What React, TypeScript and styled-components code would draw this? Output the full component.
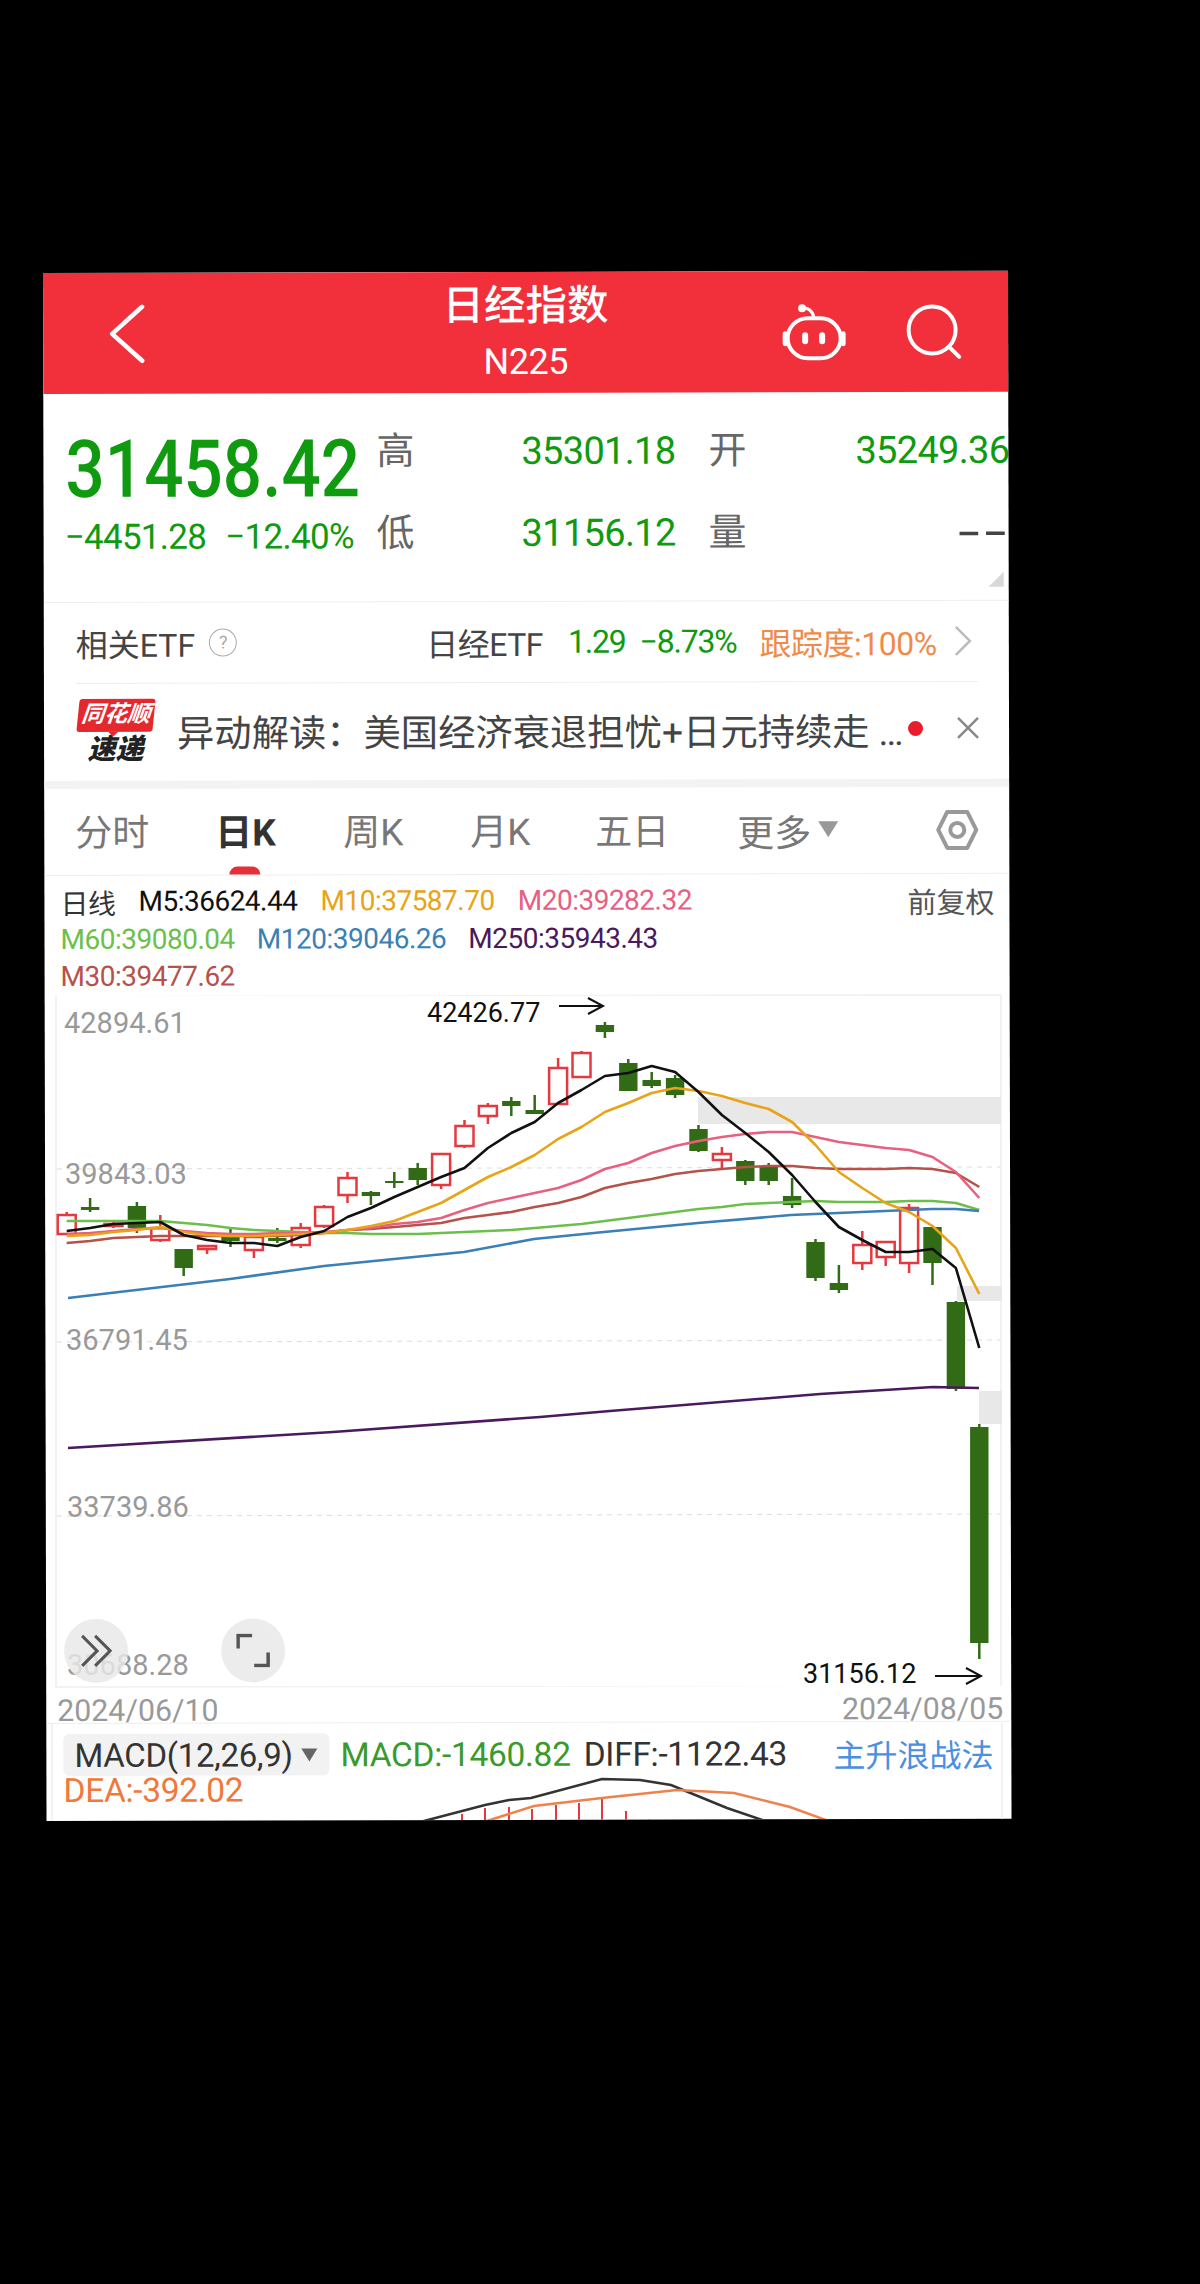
import styled, { createGlobalStyle } from "styled-components";

const SANS = `Roboto, "Noto Sans CJK SC", sans-serif`;
const GREEN = "#0f9a0f";
const CANDLE_GREEN = "#326b16";
const CANDLE_RED = "#e5393f";

// the photographed phone sits a little crooked, chart data is read in page coordinates
const TILT = 0.13;
const fromPage = (top: number) =>
   `translate(0 ${-top}) rotate(${TILT}) translate(-43 -273)`;

const xAt = (i: number) => 66.7 + i * 23.4;

type Candle = [up: boolean, high: number, top: number, bottom: number, low: number];

const candles: Candle[] = [
   [true, 1212, 1215, 1234, 1235],
   [false, 1198, 1207, 1210, 1212],
   [true, 1222, 1224, 1226, 1228],
   [false, 1202, 1206, 1228, 1233],
   [true, 1215, 1228, 1240, 1242],
   [false, 1249, 1249, 1268, 1276],
   [true, 1246, 1246, 1249, 1254],
   [false, 1228, 1237, 1241, 1247],
   [true, 1235, 1237, 1250, 1258],
   [false, 1228, 1238, 1241, 1243],
   [true, 1223, 1228, 1245, 1248],
   [true, 1205, 1207, 1226, 1228],
   [true, 1172, 1178, 1195, 1203],
   [false, 1191, 1192, 1196, 1205],
   [false, 1172, 1181, 1183, 1188],
   [false, 1163, 1168, 1180, 1185],
   [true, 1154, 1154, 1185, 1189],
   [true, 1120, 1126, 1146, 1148],
   [true, 1103, 1106, 1116, 1124],
   [false, 1097, 1101, 1106, 1116],
   [false, 1095, 1110, 1114, 1114],
   [true, 1058, 1068, 1104, 1104],
   [true, 1051, 1053, 1077, 1077],
   [false, 1022, 1025, 1032, 1038],
   [false, 1059, 1063, 1091, 1091],
   [false, 1072, 1080, 1086, 1088],
   [false, 1075, 1078, 1095, 1098],
   [false, 1125, 1129, 1151, 1152],
   [true, 1147, 1154, 1160, 1168],
   [false, 1160, 1161, 1181, 1185],
   [false, 1163, 1167, 1181, 1185],
   [false, 1178, 1196, 1205, 1208],
   [false, 1239, 1242, 1278, 1281],
   [false, 1265, 1283, 1290, 1293],
   [true, 1231, 1245, 1263, 1270],
   [true, 1242, 1242, 1257, 1266],
   [true, 1204, 1208, 1263, 1273],
   [false, 1227, 1227, 1263, 1285],
   [false, 1301, 1302, 1389, 1391],
   [false, 1424, 1427, 1643, 1659],
];

const series = (values: number[]) =>
   values.map((y, i) => `${xAt(i).toFixed(1)},${y}`).join(" ");

const averages = [
   {
      color: "#6cbf4b",
      points: series([1221, 1221, 1221, 1221, 1221, 1223, 1225, 1228, 1230, 1231, 1232, 1233, 1233, 1234, 1234, 1234, 1233, 1232, 1231, 1230, 1228, 1226, 1224, 1221, 1218, 1215, 1212, 1209, 1207, 1204, 1203, 1202, 1201, 1202, 1202, 1202, 1201, 1201, 1203, 1210]),
   },
   {
      color: "#3a7fb5",
      points: "68,1298 230,1279 324,1266 464,1252 534,1239 604,1232 698,1223 791,1215 885,1211 932,1209 956,1209 979,1211",
   },
   {
      color: "#4a1a5c",
      points: "68,1448 333,1432 540,1417 610,1411 820,1394 933,1387 979,1388",
   },
   {
      color: "#b5524a",
      points: series([1243, 1241, 1238, 1237, 1236, 1236, 1236, 1236, 1236, 1236, 1235, 1233, 1230, 1229, 1227, 1225, 1223, 1218, 1215, 1212, 1207, 1203, 1197, 1188, 1183, 1179, 1174, 1171, 1169, 1167, 1166, 1166, 1168, 1169, 1169, 1169, 1168, 1169, 1173, 1187]),
   },
   {
      color: "#e8607f",
      points: series([1234, 1233, 1231, 1229, 1228, 1231, 1233, 1234, 1234, 1233, 1233, 1232, 1230, 1228, 1224, 1222, 1218, 1210, 1203, 1198, 1193, 1188, 1180, 1169, 1163, 1153, 1146, 1141, 1137, 1134, 1132, 1132, 1137, 1142, 1145, 1148, 1150, 1157, 1172, 1198]),
   },
   {
      color: "#e8a317",
      points: series([1236, 1235, 1232, 1230, 1227, 1232, 1235, 1236, 1236, 1235, 1234, 1233, 1230, 1226, 1221, 1212, 1203, 1190, 1177, 1167, 1155, 1139, 1127, 1112, 1103, 1093, 1088, 1091, 1096, 1103, 1109, 1122, 1145, 1172, 1188, 1203, 1212, 1226, 1248, 1294]),
   },
   {
      color: "#111111",
      points: series([1231, 1228, 1224, 1223, 1222, 1235, 1240, 1243, 1243, 1246, 1237, 1231, 1217, 1208, 1197, 1187, 1177, 1168, 1148, 1133, 1122, 1103, 1090, 1076, 1073, 1066, 1072, 1092, 1115, 1133, 1152, 1175, 1202, 1227, 1240, 1252, 1252, 1249, 1268, 1348]),
   },
];

const macdBars: [number, number][] = [
   [462, 1813], [485, 1807], [509, 1806], [532, 1808], [556, 1804],
   [579, 1802], [602, 1798], [626, 1810], [649, 1818],
];

const tabs = [
   { label: "分时", width: 140 },
   { label: "日K", width: 128 },
   { label: "周K", width: 127 },
   { label: "月K", width: 125 },
   { label: "五日", width: 142 },
].map((tab) => ({ ...tab, active: tab.label === "日K" }));

const GlobalStyle = createGlobalStyle`
   html, body {
      margin: 0;
      padding: 0;
      background: #000;
   }
`;

const Page = styled.div`
   width: 1200px;
   height: 2284px;
   box-sizing: border-box;
   padding: 273px 0 0 43px;
   background: #000;
   overflow: hidden;
   font-family: ${SANS};
`;

const Phone = styled.div`
   width: 965px;
   height: 1548px;
   background: #fff;
   overflow: hidden;
   transform: rotate(-${TILT}deg);
   transform-origin: 0 0;
`;

const Header = styled.header`
   height: 121px;
   background: #f1303c;
   display: grid;
   grid-template-columns: 1fr auto 1fr;
   align-items: center;
   color: #fff;
`;

const BackSlot = styled.div`
   padding-left: 66px;
   display: flex;
`;

const TitleBlock = styled.div`
   align-self: start;
   padding-top: 9px;
   display: flex;
   flex-direction: column;
   align-items: center;
`;

const Title = styled.div`
   font-size: 41.5px;
   line-height: 50px;
   font-weight: 500;
`;

const Symbol = styled.div`
   font-size: 36px;
   line-height: 42px;
   margin-top: 10px;
   letter-spacing: -0.5px;
`;

const HeaderIcons = styled.div`
   display: flex;
   justify-content: flex-end;
   align-items: center;
   gap: 60px;
   padding-right: 46px;
`;

const Quote = styled.section`
   position: relative;
   height: 209px;
   box-sizing: border-box;
   padding: 38px 0 0 22px;
   display: grid;
   grid-template-columns: 311px 145px 187px 147px 153px;
   grid-auto-rows: 40px;
   row-gap: 42px;
   border-bottom: 1px solid #eeeeee;
   overflow: hidden;
`;

const PriceBlock = styled.div`
   grid-row: span 2;
   padding-top: 8px;
`;

const BigPrice = styled.div`
   font-size: 80px;
   line-height: 60px;
   font-weight: 500;
   color: ${GREEN};
   transform: scaleX(0.865);
   transform-origin: 0 50%;
   white-space: nowrap;
`;

const Changes = styled.div`
   margin-top: 22px;
   margin-left: -1px;
   display: flex;
   gap: 19px;
   font-size: 35px;
   line-height: 32px;
   color: ${GREEN};
   letter-spacing: -0.7px;
`;

const QuoteLabel = styled.div`
   font-size: 38px;
   line-height: 40px;
   color: #666666;
`;

const QuoteValue = styled.div`
   font-size: 38px;
   line-height: 40px;
   color: ${GREEN};
   letter-spacing: -0.7px;
   white-space: nowrap;
`;

const EmptyValue = styled.div`
   font-size: 38px;
   line-height: 40px;
   font-weight: 500;
   color: #444444;
   text-align: right;
   letter-spacing: 1px;
   margin-right: -1px;
   transform: scaleX(1.9);
   transform-origin: 100% 50%;
`;

const CornerMark = styled.div`
   position: absolute;
   right: 5px;
   bottom: 13px;
   width: 0;
   height: 0;
   border-left: 15px solid transparent;
   border-bottom: 15px solid #d8d8d8;
`;

const EtfRow = styled.div`
   height: 81px;
   margin: 0 31px 0 32px;
   display: flex;
   align-items: center;
   border-bottom: 1px solid #eeeeee;
   box-sizing: border-box;
   font-size: 32px;
   white-space: nowrap;
`;

const EtfName = styled.span`
   color: #444444;
`;

const HelpMark = styled.span`
   width: 26px;
   height: 26px;
   margin-left: 14px;
   border: 1.5px solid #aaaaaa;
   border-radius: 50%;
   font-size: 18px;
   line-height: 26px;
   text-align: center;
   color: #aaaaaa;
`;

const EtfTrack = styled.span<{ $gap: number; $color: string; $tight?: boolean }>`
   margin-left: ${(p) => p.$gap}px;
   color: ${(p) => p.$color};
   letter-spacing: ${(p) => (p.$tight ? -1.2 : -0.5)}px;
`;

const EtfChevron = styled.svg`
   margin-left: 16px;
`;

const NewsRow = styled.div`
   height: 105px;
   box-sizing: border-box;
   padding: 15px 28px 0 33px;
   display: flex;
   align-items: flex-start;
   border-bottom: 8px solid #f3f3f3;
`;

const Logo = styled.div`
   width: 77px;
   flex-shrink: 0;
   display: flex;
   flex-direction: column;
   align-items: center;
`;

const LogoBadge = styled.div`
   position: relative;
   width: 76px;
   height: 33px;
   background: #e5282e;
   border-radius: 3px;
   transform: skewX(-6deg);
   color: #fff;
   font-size: 23px;
   line-height: 32px;
   font-weight: 700;
   font-style: italic;
   text-align: center;
   white-space: nowrap;

   &::after {
      content: "";
      position: absolute;
      left: 32px;
      bottom: -5px;
      border-left: 5px solid transparent;
      border-right: 5px solid transparent;
      border-top: 5px solid #e5282e;
   }
`;

const LogoWord = styled.div`
   margin-top: 2px;
   font-size: 28px;
   line-height: 31px;
   font-weight: 900;
   font-style: italic;
   color: #222222;
   white-space: nowrap;
`;

const NewsText = styled.div`
   width: 722px;
   margin: 15px 0 0 23px;
   flex-shrink: 0;
   font-size: 37.3px;
   line-height: 40px;
   color: #444444;
   white-space: nowrap;
`;

const NewsEllipsis = styled.span`
   margin-left: 9px;
`;

const NewsDot = styled.span`
   width: 15px;
   height: 15px;
   margin: 24px 0 0 9px;
   flex-shrink: 0;
   border-radius: 50%;
   background: #ea1d2c;
`;

const NewsClose = styled.svg`
   margin: 19px 0 0 33px;
   flex-shrink: 0;
`;

const TabBar = styled.nav`
   height: 87px;
   box-sizing: border-box;
   padding-left: 31px;
   display: flex;
   border-bottom: 1px solid #eeeeee;
`;

const Tab = styled.div<{ $width: number; $active?: boolean }>`
   position: relative;
   width: ${(p) => p.$width}px;
   flex-shrink: 0;
   font-size: 37px;
   line-height: 90px;
   font-weight: ${(p) => (p.$active ? 700 : 400)};
   color: ${(p) => (p.$active ? "#333333" : "#777777")};

   &::after {
      content: "";
      display: ${(p) => (p.$active ? "block" : "none")};
      position: absolute;
      left: 14px;
      bottom: 0;
      width: 31px;
      height: 8px;
      border-radius: 8px 8px 0 0;
      background: #e5303a;
   }
`;

const MoreTab = styled.div`
   width: 199px;
   flex-shrink: 0;
   display: flex;
   align-items: center;
   gap: 7px;
   font-size: 37px;
   color: #777777;
`;

const MoreCaret = styled.span`
   width: 0;
   height: 0;
   margin-top: -2px;
   border-left: 10px solid transparent;
   border-right: 10px solid transparent;
   border-top: 16px solid #999999;
`;

const SettingsIcon = styled.svg`
   align-self: center;
   margin-left: -1px;
`;

const Legend = styled.div`
   height: 120px;
   box-sizing: border-box;
   padding: 7px 15px 0 16px;
`;

const LegendRow = styled.div<{ $gap?: number }>`
   height: 37.5px;
   display: flex;
   align-items: center;
   gap: ${(p) => p.$gap ?? 22}px;
   font-size: 28px;
   letter-spacing: -0.5px;
   white-space: nowrap;
`;

const LegendItem = styled.span<{ $color: string }>`
   color: ${(p) => p.$color};
`;

const Adjust = styled.span`
   margin-left: auto;
   font-size: 29px;
   color: #555555;
   letter-spacing: 0;
`;

const ChartArea = styled.div`
   position: relative;
   height: 692px;
`;

const ChartSvg = styled.svg`
   display: block;
   width: 965px;
   height: 692px;
`;

const AxisText = styled.text`
   font-family: ${SANS};
   font-size: 29px;
   fill: #999999;
`;

const PeakText = styled.text`
   font-family: ${SANS};
   font-size: 27px;
   fill: #111111;
`;

const RoundButton = styled.div<{ $left: number }>`
   position: absolute;
   left: ${(p) => p.$left}px;
   bottom: 5px;
   width: 64px;
   height: 64px;
   border-radius: 50%;
   background: rgba(232, 232, 232, 0.82);
   display: flex;
   align-items: center;
   justify-content: center;
`;

const DateRow = styled.div`
   height: 35px;
   padding: 0 8px 0 11px;
   display: flex;
   justify-content: space-between;
   font-size: 30.3px;
   line-height: 46px;
   color: #999999;
`;

const MacdPanel = styled.section`
   position: relative;
   height: 102px;
   border-top: 1px solid #eeeeee;
`;

const MacdSvg = styled.svg`
   position: absolute;
   left: 0;
   top: 0;
   width: 965px;
   height: 102px;
`;

const MacdHead = styled.div`
   position: relative;
   padding: 8px 18px 0 17px;
   display: flex;
   align-items: center;
   font-size: 33.5px;
   white-space: nowrap;
`;

const MacdSelect = styled.div`
   width: 266px;
   height: 42px;
   box-sizing: border-box;
   padding-left: 11px;
   display: flex;
   align-items: center;
   gap: 9px;
   background: #f2f2f2;
   border-radius: 6px;
   font-size: 33px;
   color: #333333;
   letter-spacing: -0.3px;
`;

const SelectCaret = styled.span`
   width: 0;
   height: 0;
   border-left: 8px solid transparent;
   border-right: 8px solid transparent;
   border-top: 13px solid #666666;
`;

const MacdValue = styled.span<{ $color: string; $gap: number }>`
   margin-left: ${(p) => p.$gap}px;
   color: ${(p) => p.$color};
   letter-spacing: -0.3px;
`;

const Strategy = styled.span`
   margin-left: auto;
   color: #4a8fe0;
   font-size: 32px;
`;

const DeaText = styled.div`
   position: relative;
   margin: -4px 0 0 17px;
   font-size: 33.5px;
   line-height: 34px;
   color: #f0783c;
   letter-spacing: -0.3px;
`;

const CandleMark = ({ candle, index }: { candle: Candle; index: number }) => {
   const [up, high, top, bottom, low] = candle;
   const x = xAt(index);
   const color = up ? CANDLE_RED : CANDLE_GREEN;
   return (
      <g stroke={color} strokeWidth={2.5}>
         <line x1={x} x2={x} y1={high} y2={top} />
         <line x1={x} x2={x} y1={bottom} y2={low} />
         {up ? (
            <rect x={x - 9} y={top} width={18} height={bottom - top} fill="#fff" />
         ) : (
            <rect x={x - 9.2} y={top} width={18.4} height={bottom - top} fill={color} stroke="none" />
         )}
      </g>
   );
};

const App = () => {
   return (
      <>
         <GlobalStyle />
         <Page>
            <Phone>
               <Header>
                  <BackSlot>
                     <svg width="36" height="60" viewBox="0 0 36 60">
                        <path d="M33 3 L3 30 L33 57" fill="none" stroke="#fff" strokeWidth="4.5" strokeLinecap="round" strokeLinejoin="round" />
                     </svg>
                  </BackSlot>
                  <TitleBlock>
                     <Title>日经指数</Title>
                     <Symbol>N225</Symbol>
                  </TitleBlock>
                  <HeaderIcons>
                     <svg width="64" height="58" viewBox="0 0 64 58">
                        <path d="M20 5 C26 4 31 8 32 15" fill="none" stroke="#fff" strokeWidth="3" strokeLinecap="round" />
                        <circle cx="20" cy="5" r="4" fill="#fff" />
                        <rect x="5.5" y="15" width="53" height="40" rx="20" fill="none" stroke="#fff" strokeWidth="4" />
                        <rect x="0.5" y="28" width="5" height="15" rx="2.5" fill="#fff" />
                        <rect x="58.5" y="28" width="5" height="15" rx="2.5" fill="#fff" />
                        <rect x="20" y="29" width="6" height="12" rx="3" fill="#fff" />
                        <rect x="37" y="29" width="6" height="12" rx="3" fill="#fff" />
                     </svg>
                     <svg width="56" height="56" viewBox="0 0 56 56">
                        <circle cx="26" cy="26" r="23.5" fill="none" stroke="#fff" strokeWidth="4" />
                        <path d="M44 44 L53 53" stroke="#fff" strokeWidth="4" strokeLinecap="round" />
                     </svg>
                  </HeaderIcons>
               </Header>

               <Quote>
                  <PriceBlock>
                     <BigPrice>31458.42</BigPrice>
                     <Changes>
                        <span>−4451.28</span>
                        <span>−12.40%</span>
                     </Changes>
                  </PriceBlock>
                  <QuoteLabel>高</QuoteLabel>
                  <QuoteValue>35301.18</QuoteValue>
                  <QuoteLabel>开</QuoteLabel>
                  <QuoteValue>35249.36</QuoteValue>
                  <QuoteLabel>低</QuoteLabel>
                  <QuoteValue>31156.12</QuoteValue>
                  <QuoteLabel>量</QuoteLabel>
                  <EmptyValue>--</EmptyValue>
                  <CornerMark />
               </Quote>

               <EtfRow>
                  <EtfName>相关ETF</EtfName>
                  <HelpMark>?</HelpMark>
                  <EtfTrack $gap={189} $color="#444444">日经ETF</EtfTrack>
                  <EtfTrack $gap={25} $color={GREEN} $tight>1.29</EtfTrack>
                  <EtfTrack $gap={14} $color={GREEN} $tight>−8.73%</EtfTrack>
                  <EtfTrack $gap={23} $color="#f08a4b">跟踪度:100%</EtfTrack>
                  <EtfChevron width="20" height="32" viewBox="0 0 20 32">
                     <path d="M3 2 L17 16 L3 30" fill="none" stroke="#bbbbbb" strokeWidth="2.5" />
                  </EtfChevron>
               </EtfRow>

               <NewsRow>
                  <Logo>
                     <LogoBadge>同花顺</LogoBadge>
                     <LogoWord>速递</LogoWord>
                  </Logo>
                  <NewsText>
                     异动解读：美国经济衰退担忧+日元持续走
                     <NewsEllipsis>…</NewsEllipsis>
                  </NewsText>
                  <NewsDot />
                  <NewsClose width="24" height="24" viewBox="0 0 24 24">
                     <path d="M2 2 L22 22 M22 2 L2 22" stroke="#888888" strokeWidth="2.5" />
                  </NewsClose>
               </NewsRow>

               <TabBar>
                  {tabs.map((tab) => (
                     <Tab key={tab.label} $width={tab.width} $active={tab.active}>
                        {tab.label}
                     </Tab>
                  ))}
                  <MoreTab>
                     更多
                     <MoreCaret />
                  </MoreTab>
                  <SettingsIcon width="44" height="42" viewBox="0 0 44 42">
                     <path d="M12 3 H32 L41 21 L32 39 H12 L3 21 Z" fill="none" stroke="#999999" strokeWidth="4" strokeLinejoin="round" />
                     <circle cx="22" cy="21" r="7" fill="none" stroke="#999999" strokeWidth="4" />
                  </SettingsIcon>
               </TabBar>

               <Legend>
                  <LegendRow $gap={23}>
                     <LegendItem $color="#333333">日线</LegendItem>
                     <LegendItem $color="#111111">M5:36624.44</LegendItem>
                     <LegendItem $color="#e8a317">M10:37587.70</LegendItem>
                     <LegendItem $color="#e8607f">M20:39282.32</LegendItem>
                     <Adjust>前复权</Adjust>
                  </LegendRow>
                  <LegendRow>
                     <LegendItem $color="#6cbf4b">M60:39080.04</LegendItem>
                     <LegendItem $color="#3a7fb5">M120:39046.26</LegendItem>
                     <LegendItem $color="#4a1a5c">M250:35943.43</LegendItem>
                  </LegendRow>
                  <LegendRow>
                     <LegendItem $color="#b5524a">M30:39477.62</LegendItem>
                  </LegendRow>
               </Legend>

               <ChartArea>
                  <ChartSvg viewBox="0 0 965 692">
                     <g transform={fromPage(723)}>
                        <rect x="56" y="995" width="945" height="692" fill="none" stroke="#eeeeee" strokeWidth="1.5" />
                        <rect x="698" y="1097" width="303" height="27" fill="#e8e8e8" />
                        <rect x="957" y="1286" width="45" height="15" fill="#e8e8e8" />
                        <rect x="979" y="1391" width="23" height="33" fill="#e8e8e8" />
                        <g stroke="#dddddd" strokeWidth="1" strokeDasharray="5 5">
                           <line x1="57" x2="1000" y1="1169" y2="1167" />
                           <line x1="57" x2="1000" y1="1342" y2="1340" />
                           <line x1="57" x2="1000" y1="1516" y2="1514" />
                        </g>
                        <AxisText x="64" y="1033">42894.61</AxisText>
                        <AxisText x="65" y="1184">39843.03</AxisText>
                        <AxisText x="66" y="1350">36791.45</AxisText>
                        <AxisText x="67" y="1517">33739.86</AxisText>
                        <AxisText x="67" y="1675">30688.28</AxisText>
                        {candles.map((candle, i) => (
                           <CandleMark key={i} candle={candle} index={i} />
                        ))}
                        {averages.map((line) => (
                           <polyline
                              key={line.color}
                              points={line.points}
                              fill="none"
                              stroke={line.color}
                              strokeWidth="2.6"
                              strokeLinejoin="round"
                           />
                        ))}
                        <PeakText x="427" y="1022">42426.77</PeakText>
                        <path d="M559 1006 H602 M588 998 L603 1006 L588 1014" fill="none" stroke="#111111" strokeWidth="2" />
                        <PeakText x="803" y="1683">31156.12</PeakText>
                        <path d="M935 1676 H980 M966 1668 L981 1676 L966 1684" fill="none" stroke="#111111" strokeWidth="2" />
                     </g>
                  </ChartSvg>
                  <RoundButton $left={18}>
                     <svg width="36" height="36" viewBox="0 0 36 36">
                        <path d="M4 3 L19 18 L4 33 M17 3 L32 18 L17 33" fill="none" stroke="#555555" strokeWidth="3" />
                     </svg>
                  </RoundButton>
                  <RoundButton $left={175}>
                     <svg width="34" height="34" viewBox="0 0 34 34">
                        <path d="M2 15 V2 H16 M32 19 V32 H18" fill="none" stroke="#555555" strokeWidth="3.5" />
                     </svg>
                  </RoundButton>
               </ChartArea>

               <DateRow>
                  <span>2024/06/10</span>
                  <span>2024/08/05</span>
               </DateRow>

               <MacdPanel>
                  <MacdSvg viewBox="0 0 965 102">
                     <g transform={fromPage(1450)}>
                        <line x1="1002" x2="1002" y1="1722" y2="1830" stroke="#eeeeee" strokeWidth="1.5" />
                        <line x1="52" x2="52" y1="1722" y2="1830" stroke="#eeeeee" strokeWidth="1.5" />
                        {macdBars.map(([x, y]) => (
                           <line key={x} x1={x} x2={x} y1={y} y2="1830" stroke="#e5393f" strokeWidth="2" />
                        ))}
                        <polyline points="386,1830 424,1820 485,1804 509,1799 531,1797 602,1778 640,1779 671,1784 727,1807 771,1822 790,1830" fill="none" stroke="#333333" strokeWidth="2.5" />
                        <polyline points="456,1830 487,1820 534,1805 602,1797 677,1789 734,1792 790,1806 834,1822 850,1830" fill="none" stroke="#f0814a" strokeWidth="2.5" />
                     </g>
                  </MacdSvg>
                  <MacdHead>
                     <MacdSelect>
                        MACD(12,26,9)
                        <SelectCaret />
                     </MacdSelect>
                     <MacdValue $color="#3a9a2c" $gap={11}>MACD:-1460.82</MacdValue>
                     <MacdValue $color="#333333" $gap={13}>DIFF:-1122.43</MacdValue>
                     <Strategy>主升浪战法</Strategy>
                  </MacdHead>
                  <DeaText>DEA:-392.02</DeaText>
               </MacdPanel>
            </Phone>
         </Page>
      </>
   );
};

export default App;
